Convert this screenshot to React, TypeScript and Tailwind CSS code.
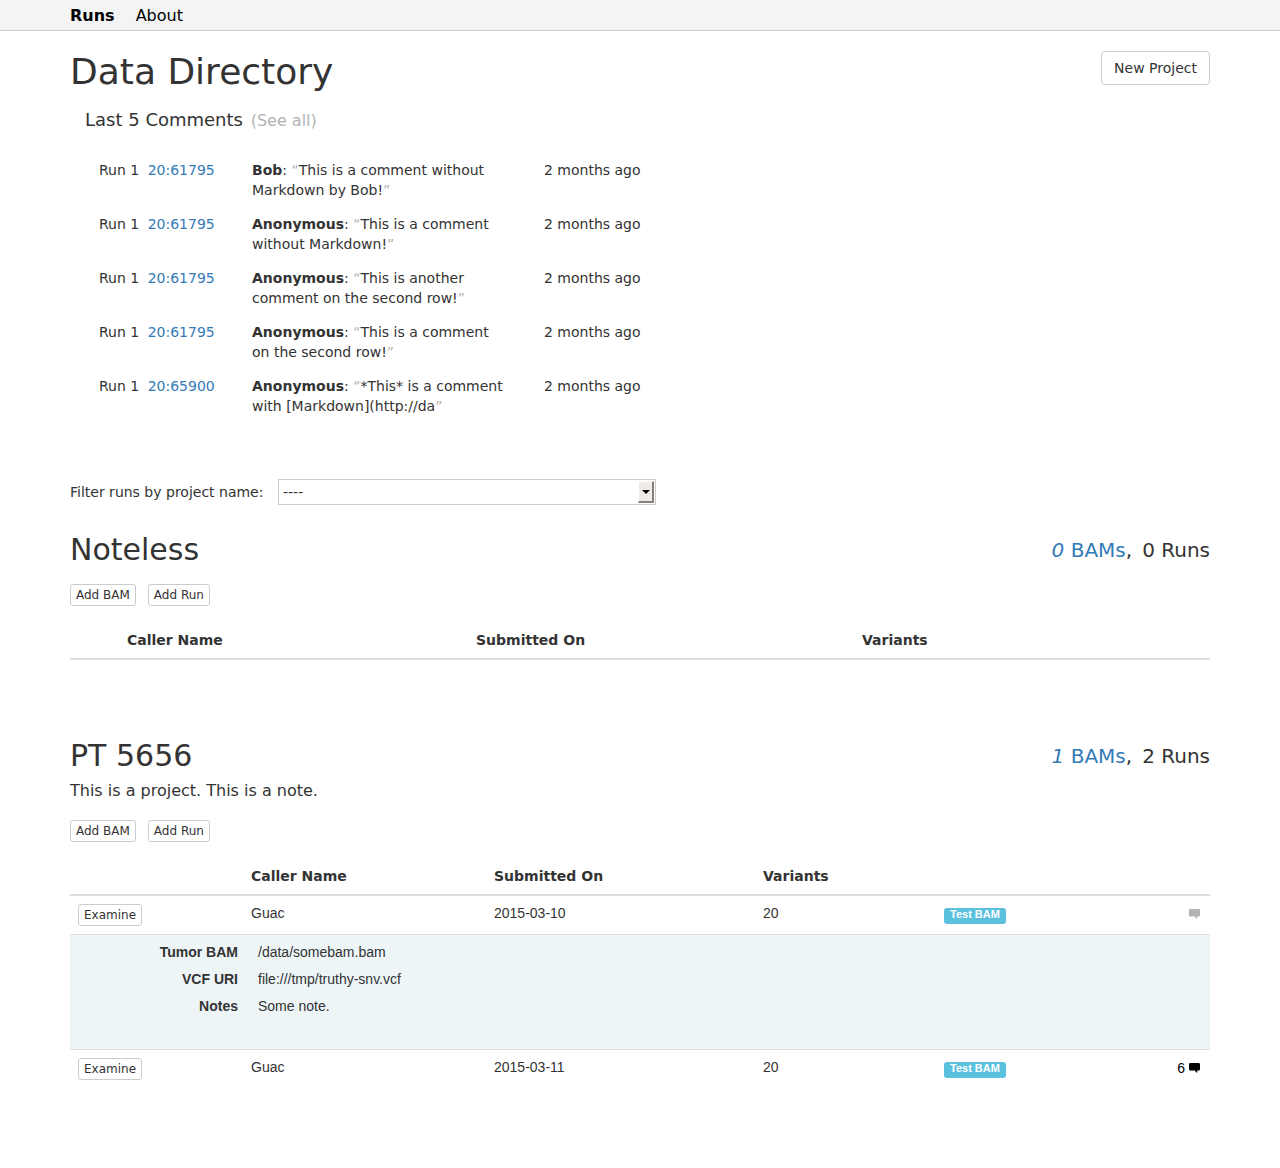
import React from "react";

const comments = [
  { locus: "20:61795", author: "Bob", text: "This is a comment without Markdown by Bob!" },
  { locus: "20:61795", author: "Anonymous", text: "This is a comment without Markdown!" },
  { locus: "20:61795", author: "Anonymous", text: "This is another comment on the second row!" },
  { locus: "20:61795", author: "Anonymous", text: "This is a comment on the second row!" },
  { locus: "20:65900", author: "Anonymous", text: "*This* is a comment with [Markdown](http://da" },
];

function SmallButton({ children }: { children: React.ReactNode }) {
  return (
    <button type="button" className="h-[22px] rounded-[3px] border border-[#ccc] bg-white px-[5px] text-xs leading-5 whitespace-nowrap">
      {children}
    </button>
  );
}

function CommentIcon() {
  return (
    <svg width="11" height="10" viewBox="0 0 11 10" fill="currentColor" aria-hidden="true">
      <path d="M1.4 0h8.2Q11 0 11 1.4v4.8Q11 7.6 9.6 7.6H8.2V9.8H7.6L5.8 7.6H1.4Q0 7.6 0 6.2V1.4Q0 0 1.4 0z" />
    </svg>
  );
}

function ProjectHeader({ name, note, bams, runs }: { name: string; note?: string; bams: number; runs: number }) {
  return (
    <>
      <div className="flex items-center justify-between">
        <h2 className="text-3xl leading-9">{name}</h2>
        <div className="flex gap-2.5 text-xl leading-9">
          <span>
            <a href="#bams" className="text-[#337ab7]">
              <em>{bams}</em> BAMs
            </a>
            ,
          </span>
          <span>{runs} Runs</span>
        </div>
      </div>
      {note && <p className="mt-1 text-base leading-[26px]">{note}</p>}
      <div className="mt-4 flex gap-3">
        <SmallButton>Add BAM</SmallButton>
        <SmallButton>Add Run</SmallButton>
      </div>
    </>
  );
}

function RunRow({ date, count }: { date: string; count?: number }) {
  return (
    <tr className="align-top font-['Liberation_Sans',sans-serif]">
      <td className="p-2 font-['DejaVu_Sans',sans-serif]">
        <div className="flex">
          <SmallButton>Examine</SmallButton>
        </div>
      </td>
      <td className="px-2 py-[7px]">Guac</td>
      <td className="px-2 py-[7px]">{date}</td>
      <td className="px-2 py-[7px]">20</td>
      <td className="px-2 pt-3">
        <span className="block w-fit rounded-[3px] bg-[#5bc0de] px-[6px] pb-[3px] text-[11px] leading-[13px] font-bold text-white">
          Test BAM
        </span>
      </td>
      <td className="px-[10px] py-2">
        <a href="#comments" aria-label="Comments" className={count ? "flex items-center justify-end gap-1 text-black" : "flex h-5 items-center justify-end text-[#b3b3b3]"}>
          {count && <span>{count}</span>}
          <CommentIcon />
        </a>
      </td>
    </tr>
  );
}

const details = [
  ["Tumor BAM", "/data/somebam.bam"],
  ["VCF URI", "file:///tmp/truthy-snv.vcf"],
  ["Notes", "Some note."],
];

export default function App() {
  return (
    <div className="bg-white pb-20 font-['DejaVu_Sans',sans-serif] text-sm leading-5 text-[#333]">
      <nav className="border-b border-[#ccc] bg-[#f4f4f4] text-base leading-7 text-black">
        <div className="mx-auto flex max-w-[1170px] gap-[21px] px-[15px] pt-0.5">
          <a href="#runs" className="font-bold">Runs</a>
          <a href="#about">About</a>
        </div>
      </nav>

      <main className="mx-auto max-w-[1170px] px-[15px]">
        <header className="flex items-start justify-between pt-5">
          <h1 className="text-4xl leading-[42px]">Data Directory</h1>
          <button type="button" className="h-[34px] rounded border border-[#ccc] bg-white px-3">New Project</button>
        </header>

        <section className="mt-[17px] px-[15px]">
          <h2 className="text-lg leading-5">
            Last 5 Comments <a href="#all" className="ml-0.5 text-base leading-5 text-[#b3b3b3]">(See all)</a>
          </h2>
          <table className="mt-[22px] table-fixed">
            <colgroup>
              <col className="w-[153px]" />
              <col className="w-[292px]" />
              <col className="w-[125px]" />
            </colgroup>
            <tbody>
              {comments.map((c, i) => (
                <tr key={i} className="align-top">
                  <td className="py-[7px] pl-[14px]">
                    Run 1 <a href="#locus" className="ml-1 text-[#337ab7]">{c.locus}</a>
                  </td>
                  <td className="py-[7px] pr-5 pl-[14px]">
                    <strong>{c.author}</strong>: <span className="text-[#b3b3b3]">“</span>
                    {c.text}
                    <span className="text-[#b3b3b3]">”</span>
                  </td>
                  <td className="py-[7px] pl-[14px] whitespace-nowrap">2 months ago</td>
                </tr>
              ))}
            </tbody>
          </table>
        </section>

        <div className="mt-14 flex items-center gap-[11px]">
          <label htmlFor="project" className="min-w-[197px]">Filter runs by project name:</label>
          <div className="relative w-[378px]">
            <select id="project" className="block h-[26px] w-full appearance-none border border-[#ccc] bg-white px-1 text-sm leading-5">
              <option>----</option>
            </select>
            <span className="pointer-events-none absolute top-[2px] right-[2px] flex h-[22px] w-4 items-center justify-center border-t border-r-2 border-b-2 border-l border-t-white border-r-[#85827d] border-b-[#85827d] border-l-white bg-[#efebe7]">
              <svg width="8" height="4" viewBox="0 0 8 4" aria-hidden="true">
                <path d="M0 0h8L4 4z" fill="#000" />
              </svg>
            </span>
          </div>
        </div>

        <section className="mt-[27px]">
          <ProjectHeader name="Noteless" bams={0} runs={0} />
          <table className="mt-4 w-full table-fixed border-b-2 border-[#ddd]">
            <colgroup>
              <col className="w-[49px]" />
              <col className="w-[349px]" />
              <col className="w-[386px]" />
              <col />
            </colgroup>
            <thead>
              <tr className="text-left">
                <td />
                <th className="p-2">Caller Name</th>
                <th className="p-2">Submitted On</th>
                <th className="p-2">Variants</th>
              </tr>
            </thead>
          </table>
        </section>

        <section className="mt-[78px]">
          <ProjectHeader name="PT 5656" note="This is a project. This is a note." bams={1} runs={2} />
          <table className="mt-4 w-full table-fixed">
            <colgroup>
              <col className="w-[173px]" />
              <col className="w-[243px]" />
              <col className="w-[269px]" />
              <col className="w-[181px]" />
              <col />
              <col className="w-20" />
            </colgroup>
            <thead className="border-b-2 border-[#ddd]">
              <tr className="text-left">
                <td />
                <th className="p-2">Caller Name</th>
                <th className="p-2">Submitted On</th>
                <th className="p-2">Variants</th>
                <td />
                <td />
              </tr>
            </thead>
            <tbody>
              <RunRow date="2015-03-10" />
              <tr className="border-y border-[#ddd] bg-[#edf5f7] font-['Liberation_Sans',sans-serif]">
                <td colSpan={6} className="pt-[7px] pb-[26px]">
                  <dl>
                    {details.map(([k, v]) => (
                      <div key={k} className="mb-[7px] flex gap-5">
                        <dt className="w-[168px] text-right font-bold">{k}</dt>
                        <dd>{v}</dd>
                      </div>
                    ))}
                  </dl>
                </td>
              </tr>
              <RunRow date="2015-03-11" count={6} />
            </tbody>
          </table>
        </section>
      </main>
    </div>
  );
}
